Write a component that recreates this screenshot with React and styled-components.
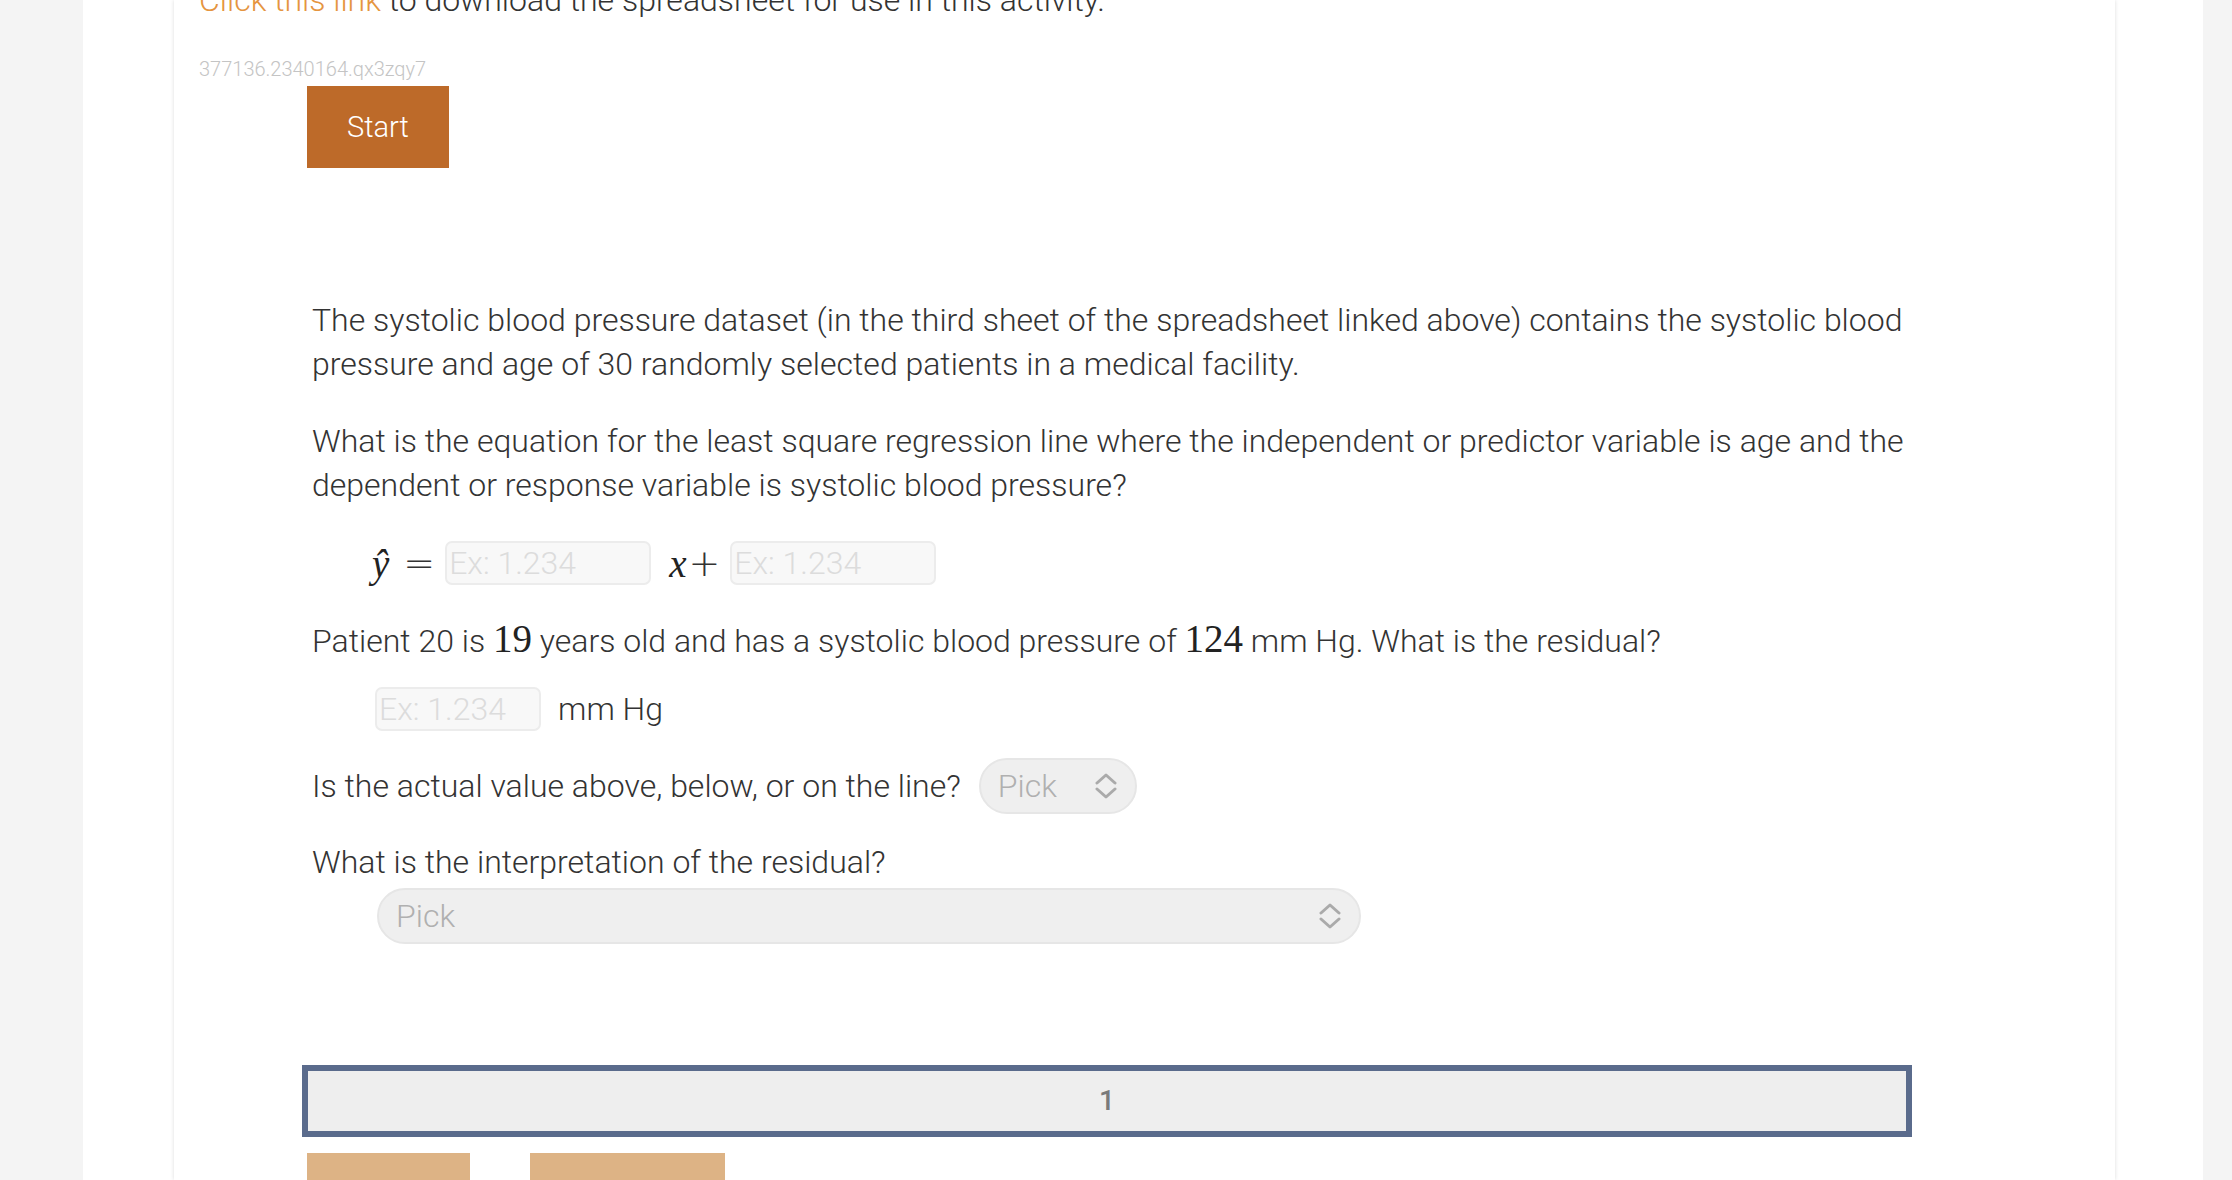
import React from 'react'
import styled, { createGlobalStyle } from 'styled-components'

const Global = createGlobalStyle`
  html, body {
    margin: 0;
    padding: 0;
    background: #f4f4f4;
    overflow: hidden;
  }
  body {
    font-family: Roboto, "Noto Sans", sans-serif;
  }
`

const Page = styled.div`
  display: flex;
  height: 1180px;
  padding-left: 83px;
`

const Main = styled.main`
  width: 2120px;
  background: #fff;
  display: flex;
  padding: 0 88px 0 91px;
  box-sizing: border-box;
`

const Card = styled.section`
  flex: 1;
  background: #fff;
  box-shadow: 0 0 4px rgba(0, 0, 0, 0.14);
  padding: 0 25px;
  font-family: "Roboto Light", Roboto, sans-serif;
  font-weight: 300;
  font-size: 32px;
  line-height: 44px;
  color: #333;
`

const Intro = styled.p`
  margin: -22px 0 0;
`

const Link = styled.a`
  color: #e5953f;
  text-decoration: none;
`

const Seed = styled.div`
  margin-top: 35px;
  font-size: 20px;
  line-height: 24px;
  color: #c4c4c4;
`

const Questions = styled.div`
  margin-left: 104px;
  width: 1612px;
`

const StartButton = styled.button`
  margin: 5px 0 0 4px;
  width: 142px;
  height: 82px;
  border: 0;
  background: #bd6a29;
  color: #fff;
  font-family: "Roboto Light", Roboto, sans-serif;
  font-weight: 300;
  font-size: 29px;
  cursor: pointer;
`

const Para = styled.p`
  margin: ${p => p.$top || 0}px 0 0 9px;
`

const Row = styled.div`
  display: flex;
  align-items: center;
  margin-top: ${p => p.$top || 0}px;
  margin-left: ${p => p.$indent || 0}px;
  gap: ${p => p.$gap || 0}px;
`

const Math = styled.span`
  font-family: "Liberation Serif", "DejaVu Serif", serif;
  font-style: ${p => p.$italic ? 'italic' : 'normal'};
  font-size: 39px;
  line-height: 1;
  color: #222;
`

const Op = styled.span`
  font-family: "DejaVu Sans", sans-serif;
  font-weight: 200;
  font-size: 38px;
  line-height: 1;
  color: #333;
  margin: ${p => p.$m || '0'};
`

const Answer = styled.input`
  box-sizing: border-box;
  width: ${p => p.$w}px;
  height: 44px;
  border: 2px solid #ececec;
  border-radius: 7px;
  background: #f8f8f8;
  padding: 0 2px;
  font-family: "Roboto Light", Roboto, sans-serif;
  font-weight: 300;
  font-size: 32px;
  color: #333;
  outline: none;
  &::placeholder {
    color: #dcdcdc;
  }
`

const Unit = styled.span`
  margin-left: 17px;
`

const Select = styled.div`
  box-sizing: border-box;
  display: flex;
  align-items: center;
  justify-content: space-between;
  width: ${p => p.$w}px;
  height: 56px;
  padding: 0 18px 0 17px;
  border: 2px solid #e6e6e6;
  border-radius: 28px;
  background: #efefef;
  color: #b0b0b0;
  font-size: 32px;
  margin-left: ${p => p.$indent || 0}px;
  margin-top: ${p => p.$top || 0}px;
`

const Pager = styled.div`
  box-sizing: border-box;
  margin: 121px 0 0 -1px;
  height: 72px;
  width: 1610px;
  border: 6px solid #5a6b8c;
  background: #eeeeee;
  display: flex;
  align-items: center;
  justify-content: center;
  font-family: Roboto, sans-serif;
  font-weight: 500;
  font-size: 28px;
  color: #7a7a7a;
`

const Actions = styled.div`
  display: flex;
  gap: 60px;
  margin: 16px 0 0 4px;
`

const TanButton = styled.button`
  width: ${p => p.$w}px;
  height: 60px;
  border: 0;
  background: #ddb385;
`

const UpDown = () => (
  <svg width="22" height="26" viewBox="0 0 22 26" fill="none" stroke="#aaa" strokeWidth="3" strokeLinecap="round" strokeLinejoin="round">
    <polyline points="2,10 11,2 20,10" />
    <polyline points="2,16 11,24 20,16" />
  </svg>
)

export default function App() {
  return (
    <>
      <Global />
      <Page>
        <Main>
          <Card>
            <Intro>
              <Link href="#">Click this link</Link> to download the spreadsheet for use in this activity.
            </Intro>
            <Seed>377136.2340164.qx3zqy7</Seed>
            <Questions>
              <StartButton>Start</StartButton>
              <Para $top={130}>
                The systolic blood pressure dataset (in the third sheet of the spreadsheet linked above) contains the systolic blood pressure and age of 30 randomly selected patients in a medical facility.
              </Para>
              <Para $top={33}>
                What is the equation for the least square regression line where the independent or predictor variable is age and the dependent or response variable is systolic blood pressure?
              </Para>
              <Row $top={34} $indent={69}>
                <Math $italic>ŷ</Math>
                <Op $m="0 10px 0 14px">=</Op>
                <Answer $w={206} placeholder="Ex: 1.234" />
                <Math $italic style={{ marginLeft: 18 }}>x</Math>
                <Op $m="0 10px 0 2px">+</Op>
                <Answer $w={206} placeholder="Ex: 1.234" />
              </Row>
              <Para $top={34}>
                Patient 20 is <Math>19</Math> years old and has a systolic blood pressure of <Math>124</Math> mm Hg. What is the residual?
              </Para>
              <Row $top={24} $indent={72}>
                <Answer $w={166} placeholder="Ex: 1.234" />
                <Unit>mm Hg</Unit>
              </Row>
              <Row $top={27} $indent={9} $gap={18}>
                <span>Is the actual value above, below, or on the line?</span>
                <Select $w={158}>
                  Pick
                  <UpDown />
                </Select>
              </Row>
              <Para $top={26}>What is the interpretation of the residual?</Para>
              <Select $w={984} $indent={74} $top={4}>
                Pick
                <UpDown />
              </Select>
              <Pager>1</Pager>
              <Actions>
                <TanButton $w={163} />
                <TanButton $w={195} />
              </Actions>
            </Questions>
          </Card>
        </Main>
      </Page>
    </>
  )
}
